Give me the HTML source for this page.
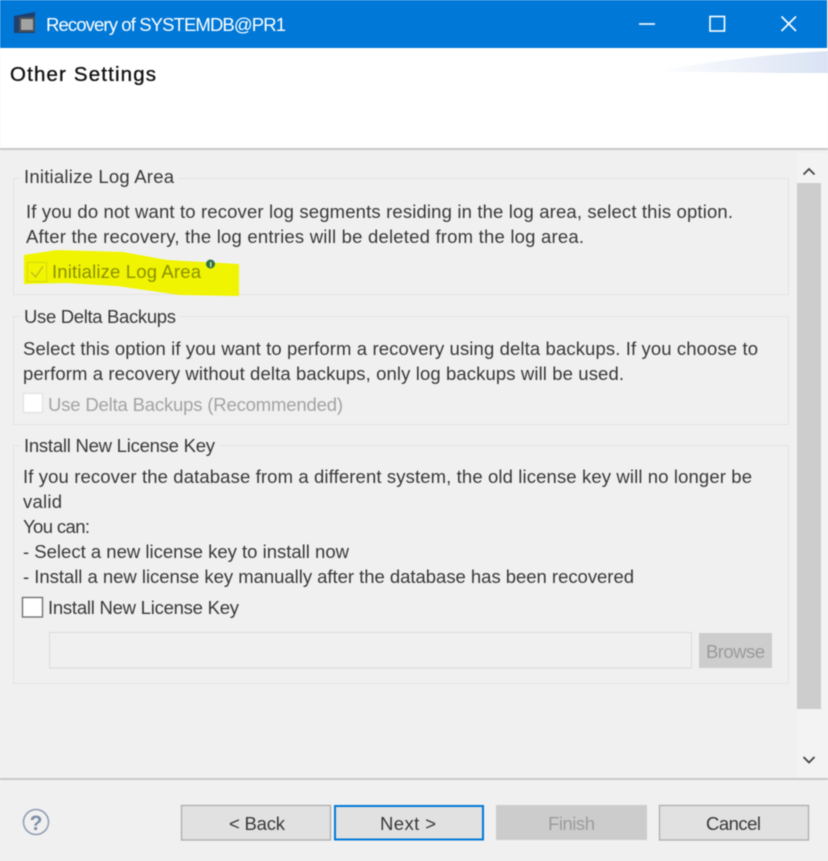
<!DOCTYPE html>
<html>
<head>
<meta charset="utf-8">
<title>Recovery of SYSTEMDB@PR1</title>
<style>
html,body{margin:0;padding:0;width:828px;height:861px;overflow:hidden;background:#f0f0f0}
svg{display:block;filter:blur(0.45px)}
text{font-family:"Liberation Sans",sans-serif;font-size:18.500px;fill:#353535;white-space:pre}
.l{font-size:18.500px;fill:#383838}
.g{fill:#a3a3a3}
</style>
</head>
<body>
<svg width="828" height="861" viewBox="0 0 828 861" xmlns="http://www.w3.org/2000/svg">
<defs>
<linearGradient id="b" x1="0" x2="1" y1="0" y2="0">
<stop offset="0" stop-color="#ffffff"/>
<stop offset="1" stop-color="#d9e3f4"/>
</linearGradient>
</defs>
<rect width="828" height="861" fill="#f0f0f0"/>

<!-- Title bar -->
<rect x="0" y="0" width="827" height="48" fill="#0078d7"/>
<path d="M14 16L35 12V33H14Z" fill="#1f3f6e"/>
<rect x="19" y="17" width="16" height="15" fill="#4a4f55"/>
<rect x="21" y="19" width="12" height="11" fill="#a3a3a3"/>
<text x="46" y="31" textLength="240" lengthAdjust="spacing" style="fill:#ffffff;font-size:18.500px">Recovery of SYSTEMDB@PR1</text>
<path d="M639 24H655" stroke="#fff" stroke-width="1.600" fill="none"/>
<rect x="710" y="16.500" width="14.500" height="14.500" stroke="#fff" stroke-width="1.600" fill="none"/>
<path d="M781.500 16.500L796 31M796 16.500L781.500 31" stroke="#fff" stroke-width="1.600" fill="none"/>

<!-- Header -->
<rect x="0" y="48" width="828" height="101" fill="#ffffff"/>
<path d="M655 72C700 62 770 54 828 51V73H780C740 72 700 72 655 72Z" fill="url(#b)"/>
<text x="10" y="81" textLength="146" lengthAdjust="spacing" style="font-size:20.500px;fill:#111;stroke:#111;stroke-width:.35">Other Settings</text>
<rect x="0" y="148" width="828" height="2" fill="#c8c8c8"/>

<!-- Group 1 -->
<rect x="13.500" y="178.500" width="775" height="116" fill="none" stroke="#e3e3e3"/>
<rect x="20" y="170" width="158" height="16" fill="#f0f0f0"/>
<text x="24" y="183" textLength="150" lengthAdjust="spacing" class="l">Initialize Log Area</text>
<text x="26" y="218" textLength="707" lengthAdjust="spacing" class="l">If you do not want to recover log segments residing in the log area, select this option.</text>
<text x="26" y="243" textLength="558" lengthAdjust="spacing" class="l">After the recovery, the log entries will be deleted from the log area.</text>
<path d="M24 255L57 250L123 252L167 260L239 264V296L180 295L117 286L67 283L24 284Z" fill="#f0f400"/>
<rect x="27.500" y="262.500" width="19" height="19" fill="#f2f500" stroke="#d6d910"/>
<path d="M31 272L35.500 277L43 266.500" stroke="#bcbf20" stroke-width="1.400" fill="none"/>
<text x="52" y="278" textLength="149" lengthAdjust="spacing" style="fill:#8a9000">Initialize Log Area</text>
<circle cx="210.500" cy="264" r="4.500" fill="#2f6f4f"/>
<rect x="210" y="262" width="1.500" height="5" fill="#d5e58a"/>

<!-- Group 2 -->
<rect x="13.500" y="316.500" width="775" height="108" fill="none" stroke="#e3e3e3"/>
<rect x="20" y="308" width="160" height="16" fill="#f0f0f0"/>
<text x="24" y="323" textLength="152" lengthAdjust="spacing" class="l">Use Delta Backups</text>
<text x="23" y="355" textLength="735" lengthAdjust="spacing" class="l">Select this option if you want to perform a recovery using delta backups. If you choose to</text>
<text x="23" y="380" textLength="601" lengthAdjust="spacing" class="l">perform a recovery without delta backups, only log backups will be used.</text>
<rect x="23.500" y="393.500" width="19" height="19" fill="#ffffff" stroke="#dddddd"/>
<text x="48" y="411" textLength="295" lengthAdjust="spacing" class="g">Use Delta Backups (Recommended)</text>

<!-- Group 3 -->
<rect x="13.500" y="445.500" width="775" height="238" fill="none" stroke="#e3e3e3"/>
<rect x="20" y="437" width="199" height="16" fill="#f0f0f0"/>
<text x="24" y="452" textLength="191" lengthAdjust="spacing" class="l">Install New License Key</text>
<text x="23" y="483" textLength="729" lengthAdjust="spacing" class="l">If you recover the database from a different system, the old license key will no longer be</text>
<text x="23" y="508" textLength="39" lengthAdjust="spacing" class="l">valid</text>
<text x="23" y="533" textLength="67" lengthAdjust="spacing" class="l">You can:</text>
<text x="23" y="558" textLength="326" lengthAdjust="spacing" class="l">- Select a new license key to install now</text>
<text x="23" y="583" textLength="611" lengthAdjust="spacing" class="l">- Install a new license key manually after the database has been recovered</text>
<rect x="22.500" y="597.500" width="20" height="19.500" fill="#ffffff" stroke="#6a6a6a" stroke-width="1.300"/>
<text x="48" y="614" textLength="191" lengthAdjust="spacing" class="l">Install New License Key</text>
<rect x="49.500" y="632.500" width="642" height="35.500" fill="#f0f0f0" stroke="#dcdcdc"/>
<rect x="699" y="633" width="73" height="35" fill="#cdcdcd"/>
<text x="706" y="658" textLength="59" lengthAdjust="spacing" style="fill:#9a9a9a">Browse</text>

<!-- Scrollbar -->
<rect x="797" y="153" width="31" height="625" fill="#f3f3f3"/>
<rect x="797" y="183" width="24" height="526" fill="#cdcdcd"/>
<path d="M803.500 174.500L809 169L814.500 174.500" stroke="#444" stroke-width="1.800" fill="none"/>
<path d="M803.500 757L809 762.500L814.500 757" stroke="#444" stroke-width="1.800" fill="none"/>

<!-- Footer -->
<rect x="0" y="778" width="828" height="2" fill="#c8c8c8"/>
<circle cx="36" cy="822" r="12.500" fill="#f0f0f0" stroke="#8d9cb3" stroke-width="1.500"/>
<text x="36" y="830" text-anchor="middle" style="font-size:21px;font-weight:bold;fill:#7d8ea8">?</text>

<rect x="181.500" y="805.500" width="149" height="34.500" fill="#e1e1e1" stroke="#adadad" stroke-width="1.300"/>
<text x="229" y="830" textLength="56" lengthAdjust="spacing" class="l">&lt; Back</text>
<rect x="335" y="806" width="148" height="33.500" fill="#e1e1e1" stroke="#0078d7" stroke-width="2"/>
<text x="380" y="830" textLength="56" lengthAdjust="spacing" class="l">Next &gt;</text>
<rect x="496" y="805" width="151" height="35" fill="#cccccc"/>
<text x="548" y="830" textLength="47" lengthAdjust="spacing" style="fill:#9c9c9c">Finish</text>
<rect x="659.500" y="805.500" width="149" height="34.500" fill="#e1e1e1" stroke="#adadad" stroke-width="1.300"/>
<text x="706" y="830" textLength="55" lengthAdjust="spacing" class="l">Cancel</text>
</svg>
</body>
</html>
